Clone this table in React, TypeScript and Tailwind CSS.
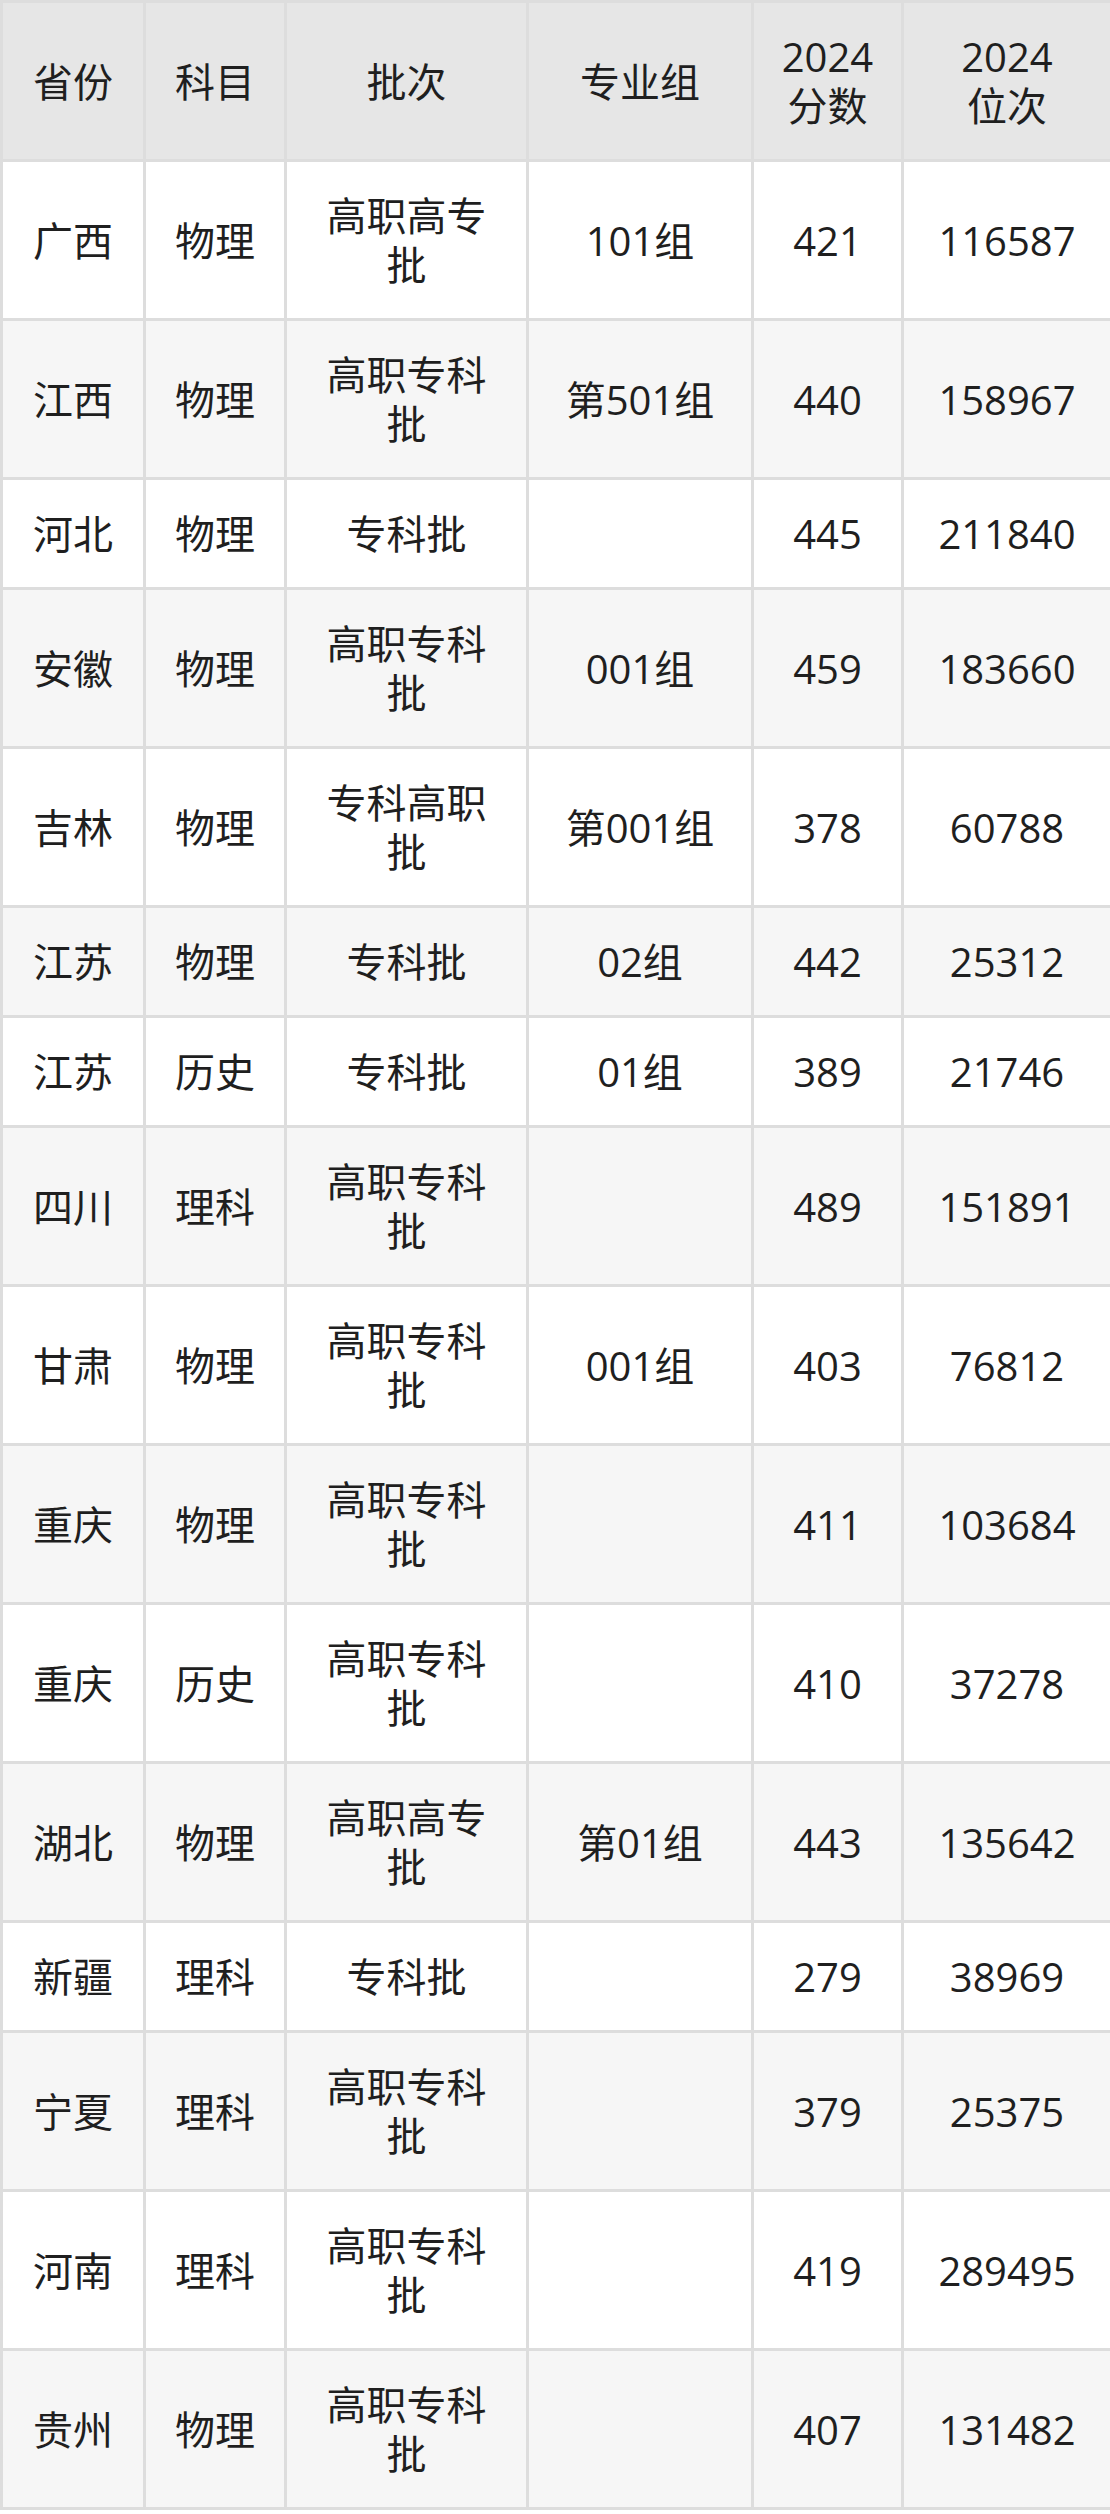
import React from "react";

type Row = { p: string; s: string; b: string; g: string; score: string; rank: string };

const rows: Row[] = [
  { p: "广西", s: "物理", b: "高职高专批", g: "101组", score: "421", rank: "116587" },
  { p: "江西", s: "物理", b: "高职专科批", g: "第501组", score: "440", rank: "158967" },
  { p: "河北", s: "物理", b: "专科批", g: "", score: "445", rank: "211840" },
  { p: "安徽", s: "物理", b: "高职专科批", g: "001组", score: "459", rank: "183660" },
  { p: "吉林", s: "物理", b: "专科高职批", g: "第001组", score: "378", rank: "60788" },
  { p: "江苏", s: "物理", b: "专科批", g: "02组", score: "442", rank: "25312" },
  { p: "江苏", s: "历史", b: "专科批", g: "01组", score: "389", rank: "21746" },
  { p: "四川", s: "理科", b: "高职专科批", g: "", score: "489", rank: "151891" },
  { p: "甘肃", s: "物理", b: "高职专科批", g: "001组", score: "403", rank: "76812" },
  { p: "重庆", s: "物理", b: "高职专科批", g: "", score: "411", rank: "103684" },
  { p: "重庆", s: "历史", b: "高职专科批", g: "", score: "410", rank: "37278" },
  { p: "湖北", s: "物理", b: "高职高专批", g: "第01组", score: "443", rank: "135642" },
  { p: "新疆", s: "理科", b: "专科批", g: "", score: "279", rank: "38969" },
  { p: "宁夏", s: "理科", b: "高职专科批", g: "", score: "379", rank: "25375" },
  { p: "河南", s: "理科", b: "高职专科批", g: "", score: "419", rank: "289495" },
  { p: "贵州", s: "物理", b: "高职专科批", g: "", score: "407", rank: "131482" },
];

const cell =
  "border-[3px] border-[#dddddd] px-[22px] py-[29px] text-center align-middle";

export default function App() {
  return (
    <div
      className="w-[1110px] bg-white text-[#1f1f1f] text-[40px] leading-[49px]"
      style={{ fontFamily: '"Open Sans", "Noto Sans CJK SC", sans-serif' }}
    >
      <table className="w-full table-fixed border-collapse">
        <colgroup>
          <col className="w-[143px]" />
          <col className="w-[141px]" />
          <col className="w-[242px]" />
          <col className="w-[225px]" />
          <col className="w-[150px]" />
          <col className="w-[209px]" />
        </colgroup>
        <thead>
          <tr className="bg-[#e6e6e6]">
            <th className={`${cell} font-normal`}>省份</th>
            <th className={`${cell} font-normal`}>科目</th>
            <th className={`${cell} font-normal`}>批次</th>
            <th className={`${cell} font-normal`}>专业组</th>
            <th className={`${cell} font-normal`}>
              <div>2024</div>
              <div>分数</div>
            </th>
            <th className={`${cell} font-normal`}>
              <div>2024</div>
              <div>位次</div>
            </th>
          </tr>
        </thead>
        <tbody>
          {rows.map((r, i) => (
            <tr key={i} className={i % 2 === 1 ? "bg-[#f6f6f6]" : "bg-white"}>
              <td className={cell}>{r.p}</td>
              <td className={cell}>{r.s}</td>
              <td className={cell}>{r.b}</td>
              <td className={cell}>{r.g}</td>
              <td className={cell}>{r.score}</td>
              <td className={cell}>{r.rank}</td>
            </tr>
          ))}
        </tbody>
      </table>
    </div>
  );
}
